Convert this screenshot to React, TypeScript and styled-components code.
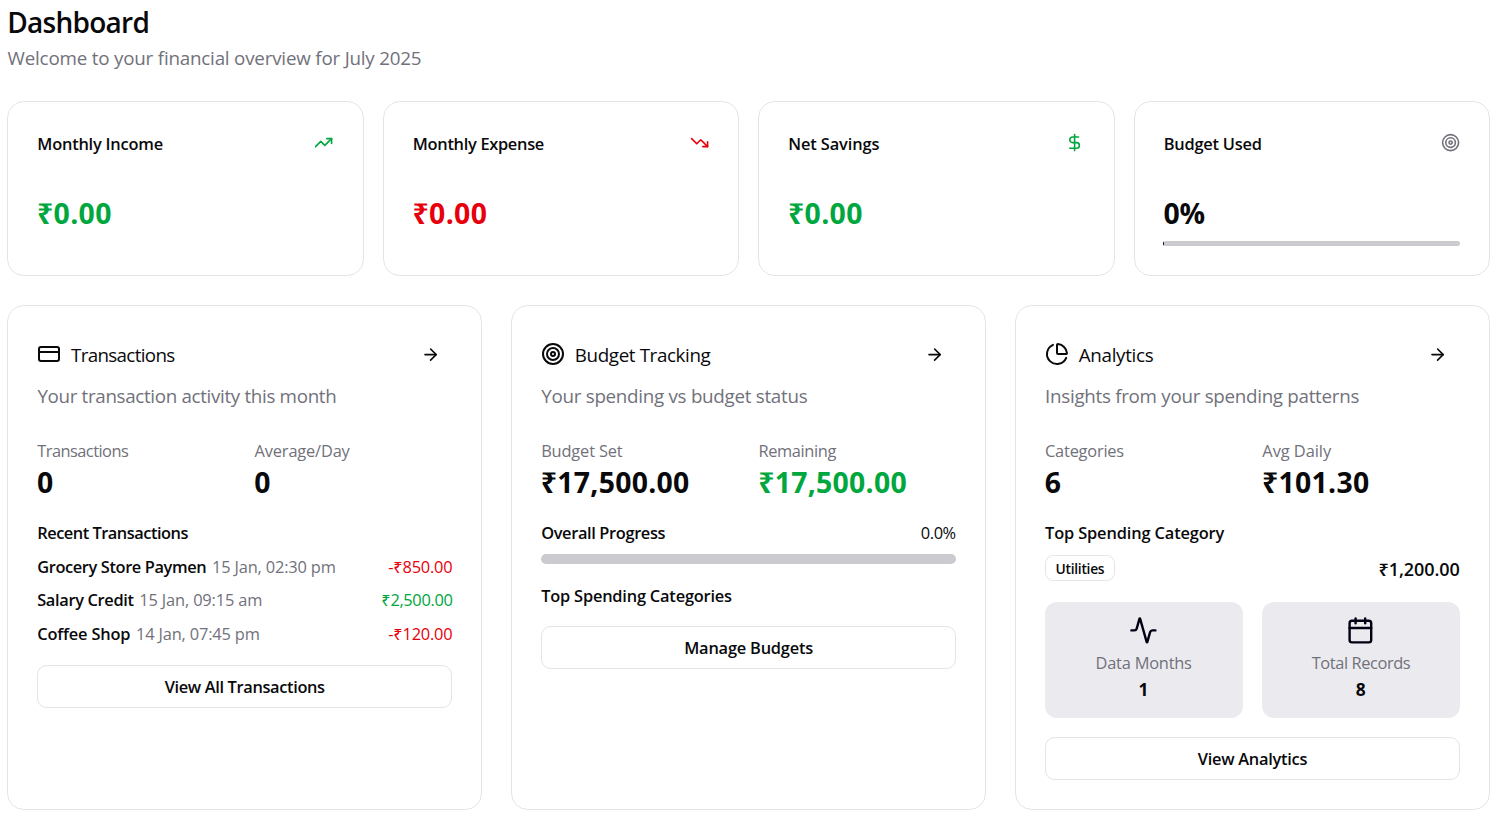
import React from "react";
import styled, { createGlobalStyle } from "styled-components";
import {
  Activity,
  ArrowRight,
  Calendar,
  ChartPie,
  CreditCard,
  DollarSign,
  Target,
  TrendingDown,
  TrendingUp,
} from "lucide-react";

const color = {
  text: "#09090b",
  muted: "#71717b",
  border: "#e4e4e7",
  green: "#00a63e",
  red: "#e7000b",
  track: "#cbcacf",
  tile: "#ebebef",
  primary: "#030014",
};

const GlobalStyle = createGlobalStyle`
  *, *::before, *::after { box-sizing: border-box; }
  body {
    margin: 0;
    background: #fff;
    color: ${color.text};
    font-family: "Open Sans", "Noto Sans", sans-serif;
    overflow: hidden;
  }
  h1, h2, h3, p { margin: 0; }
  svg { display: block; flex-shrink: 0; }
`;

type Tracked = { $ls?: number };

const Page = styled.main`
  display: flex;
  flex-direction: column;
  gap: 28.8px;
  padding: 4.9px 15px 0 7.2px;
`;

const PageTitle = styled.h1`
  font-size: 28px;
  font-weight: 600;
  line-height: 34.4px;
  padding-bottom: 4px;
  letter-spacing: -0.72px;
`;

const PageSubtitle = styled.p`
  color: ${color.muted};
  font-size: 18.8px;
  line-height: 27px;
  letter-spacing: -0.2px;
  padding: 1.8px 0 0 0.4px;
`;

const SummaryGrid = styled.section`
  display: grid;
  grid-template-columns: repeat(4, minmax(0, 1fr));
  gap: 19.2px;
`;

const PanelGrid = styled.section`
  display: grid;
  grid-template-columns: repeat(3, minmax(0, 1fr));
  gap: 28.8px;
`;

const Card = styled.article`
  border: 1px solid ${color.border};
  border-radius: 16.8px;
  padding: 28.8px;
  background: #fff;
`;

const SummaryCard = styled(Card)`
  height: 175.1px;
`;

const PanelCard = styled(Card)`
  height: 504.8px;
`;

const SummaryHeader = styled.div<{ $tone: string }>`
  display: flex;
  justify-content: space-between;
  align-items: center;
  margin-bottom: 38.4px;

  svg {
    color: ${(p) => p.$tone};
    margin: 0 0.4px 0.8px 0;
  }
`;

const Label = styled.h3<Tracked>`
  font-size: 16.4px;
  font-weight: 600;
  line-height: 22px;
  padding: 2px 0 0 0.3px;
  letter-spacing: ${(p) => p.$ls ?? 0}px;
`;

const Figure = styled.div<Tracked & { $tone?: string }>`
  color: ${(p) => p.$tone ?? color.text};
  font-size: 28.4px;
  font-weight: 700;
  line-height: 35.8px;
  padding-top: 2.6px;
  letter-spacing: ${(p) => p.$ls ?? 0}px;
`;

const StatFigure = styled(Figure)`
  padding-top: 3.1px;
`;

const Track = styled.div<{ $height: number; $top: number; $started?: boolean }>`
  height: ${(p) => p.$height}px;
  margin-top: ${(p) => p.$top}px;
  border-radius: 99px;
  overflow: hidden;
  background: ${(p) =>
    p.$started
      ? `linear-gradient(to right, ${color.primary} 0.8px, ${color.track} 0.8px)`
      : color.track};
`;

const PanelHeader = styled.div`
  display: flex;
  justify-content: space-between;
  align-items: center;
  height: 38.4px;
  margin-bottom: 7.2px;
`;

const PanelName = styled.div`
  display: flex;
  align-items: center;
  gap: 9.6px;
`;

const PanelTitle = styled.h2<Tracked>`
  font-size: 18.8px;
  font-weight: 400;
  line-height: 27px;
  letter-spacing: ${(p) => p.$ls ?? 0}px;
  padding: 3px 0 0 0.4px;
`;

const GhostButton = styled.button`
  display: flex;
  align-items: center;
  height: 38.4px;
  padding: 0.8px 12.55px 0;
  border: 0;
  background: none;
  color: ${color.text};
`;

const PanelSubtitle = styled.p<Tracked>`
  color: ${color.muted};
  font-size: 18.8px;
  line-height: 25.4px;
  letter-spacing: ${(p) => p.$ls ?? 0}px;
  padding: 3.4px 0 0 0.4px;
  margin-bottom: 28.8px;
`;

const PanelBody = styled.div`
  display: flex;
  flex-direction: column;
  gap: 19.2px;
`;

const TwoColumns = styled.div`
  display: grid;
  grid-template-columns: repeat(2, minmax(0, 1fr));
  gap: 19.2px;
`;

const Caption = styled.p<Tracked>`
  color: ${color.muted};
  font-size: 16.4px;
  line-height: 22px;
  padding: 2px 0 0 0.3px;
  letter-spacing: ${(p) => p.$ls ?? 0}px;
`;

const TransactionList = styled.ul`
  list-style: none;
  margin: 11.1px 0 0;
  padding: 0;
  display: flex;
  flex-direction: column;
  gap: 9.6px;
`;

const TransactionRow = styled.li`
  display: flex;
  justify-content: space-between;
  font-size: 16.4px;
  line-height: 23.9px;
`;

const TransactionInfo = styled.div`
  display: flex;
  gap: 5.6px;
  padding-left: 0.2px;
`;

const TransactionName = styled.span<Tracked>`
  font-weight: 600;
  letter-spacing: ${(p) => p.$ls ?? 0}px;
`;

const TransactionTime = styled.span`
  color: ${color.muted};
  letter-spacing: -0.16px;
`;

const Amount = styled.span<Tracked & { $tone: string }>`
  color: ${(p) => p.$tone};
  letter-spacing: ${(p) => p.$ls ?? 0}px;
`;

const OutlineButton = styled.button<Tracked>`
  width: 100%;
  height: 43.2px;
  border: 1px solid ${color.border};
  border-radius: 9.6px;
  background: #fff;
  color: ${color.text};
  font-family: inherit;
  font-size: 16.4px;
  font-weight: 600;
  line-height: 24px;
  padding: 1.4px 0 0;
  letter-spacing: ${(p) => p.$ls ?? 0}px;
`;

const SplitRow = styled.div`
  display: flex;
  justify-content: space-between;
  align-items: center;
`;

const Percent = styled.span`
  font-size: 16.4px;
  line-height: 22px;
  padding: 2px 0.6px 0 0;
  letter-spacing: -0.42px;
`;

const CategoryRow = styled(SplitRow)`
  height: 28.8px;
  margin-top: 10.2px;
`;

const Badge = styled.span`
  height: 26px;
  padding: 0 9.8px;
  border: 1px solid ${color.border};
  border-radius: 8.4px;
  font-size: 13.8px;
  font-weight: 600;
  line-height: 25px;
  letter-spacing: -0.27px;
`;

const CategoryAmount = styled.span`
  font-size: 18px;
  font-weight: 600;
  line-height: 26.8px;
  padding: 2px 0.5px 0 0;
  letter-spacing: -0.07px;
`;

const Tile = styled.div`
  display: flex;
  flex-direction: column;
  align-items: center;
  height: 115.6px;
  padding: 14.2px 0.6px 0 0;
  border-radius: 12px;
  background: ${color.tile};

  svg {
    color: ${color.primary};
    margin-bottom: 4.8px;
  }
`;

const TileValue = styled.strong`
  font-size: 17.4px;
  font-weight: 700;
  line-height: 26.4px;
  padding-top: 2.4px;
`;

const SUMMARY = [
  { label: "Monthly Income", ls: -0.22, value: "₹0.00", valueLs: 0.35, tone: color.green, iconTone: color.green, Icon: TrendingUp },
  { label: "Monthly Expense", ls: -0.3, value: "₹0.00", valueLs: 0.35, tone: color.red, iconTone: color.red, Icon: TrendingDown },
  { label: "Net Savings", ls: -0.12, value: "₹0.00", valueLs: 0.35, tone: color.green, iconTone: color.green, Icon: DollarSign },
  { label: "Budget Used", ls: -0.24, value: "0%", valueLs: -0.23, tone: color.text, iconTone: color.muted, Icon: Target, track: true },
];

const TRANSACTIONS = [
  { name: "Grocery Store Paymen", ls: -0.38, time: "15 Jan, 02:30 pm", amount: "-₹850.00", amountLs: -0.2, tone: color.red },
  { name: "Salary Credit", ls: -0.33, time: "15 Jan, 09:15 am", amount: "₹2,500.00", amountLs: -0.34, tone: color.green },
  { name: "Coffee Shop", ls: -0.17, time: "14 Jan, 07:45 pm", amount: "-₹120.00", amountLs: -0.2, tone: color.red },
];

type PanelProps = {
  Icon: typeof Target;
  title: string;
  titleLs: number;
  subtitle: string;
  subtitleLs: number;
  children: React.ReactNode;
};

function Panel({ Icon, title, titleLs, subtitle, subtitleLs, children }: PanelProps) {
  return (
    <PanelCard>
      <PanelHeader>
        <PanelName>
          <Icon size={24} />
          <PanelTitle $ls={titleLs}>{title}</PanelTitle>
        </PanelName>
        <GhostButton aria-label={`Open ${title}`}>
          <ArrowRight size={19.2} />
        </GhostButton>
      </PanelHeader>
      <PanelSubtitle $ls={subtitleLs}>{subtitle}</PanelSubtitle>
      <PanelBody>{children}</PanelBody>
    </PanelCard>
  );
}

type StatProps = { label: string; ls: number; value: string; valueLs?: number; tone?: string };

function Stat({ label, ls, value, valueLs, tone }: StatProps) {
  return (
    <div>
      <Caption $ls={ls}>{label}</Caption>
      <StatFigure $ls={valueLs} $tone={tone}>{value}</StatFigure>
    </div>
  );
}

export default function App() {
  return (
    <>
      <GlobalStyle />
      <Page>
        <header>
          <PageTitle>Dashboard</PageTitle>
          <PageSubtitle>Welcome to your financial overview for July 2025</PageSubtitle>
        </header>

        <SummaryGrid>
          {SUMMARY.map(({ label, ls, value, valueLs, tone, iconTone, Icon, track }) => (
            <SummaryCard key={label}>
              <SummaryHeader $tone={iconTone}>
                <Label $ls={ls}>{label}</Label>
                <Icon size={19.2} />
              </SummaryHeader>
              <Figure $tone={tone} $ls={valueLs}>{value}</Figure>
              {track && <Track $height={4.8} $top={9.3} $started />}
            </SummaryCard>
          ))}
        </SummaryGrid>

        <PanelGrid>
          <Panel
            Icon={CreditCard}
            title="Transactions"
            titleLs={-0.66}
            subtitle="Your transaction activity this month"
            subtitleLs={-0.33}
          >
            <TwoColumns>
              <Stat label="Transactions" ls={-0.54} value="0" />
              <Stat label="Average/Day" ls={-0.17} value="0" />
            </TwoColumns>
            <div>
              <Label $ls={-0.49}>Recent Transactions</Label>
              <TransactionList>
                {TRANSACTIONS.map((t) => (
                  <TransactionRow key={t.name}>
                    <TransactionInfo>
                      <TransactionName $ls={t.ls}>{t.name}</TransactionName>
                      <TransactionTime>{t.time}</TransactionTime>
                    </TransactionInfo>
                    <Amount $tone={t.tone} $ls={t.amountLs}>{t.amount}</Amount>
                  </TransactionRow>
                ))}
              </TransactionList>
            </div>
            <OutlineButton $ls={-0.35}>View All Transactions</OutlineButton>
          </Panel>

          <Panel
            Icon={Target}
            title="Budget Tracking"
            titleLs={-0.38}
            subtitle="Your spending vs budget status"
            subtitleLs={-0.28}
          >
            <TwoColumns>
              <Stat label="Budget Set" ls={-0.15} value="₹17,500.00" valueLs={0.27} />
              <Stat label="Remaining" ls={-0.38} value="₹17,500.00" valueLs={0.27} tone={color.green} />
            </TwoColumns>
            <div>
              <SplitRow>
                <Label $ls={-0.36}>Overall Progress</Label>
                <Percent>0.0%</Percent>
              </SplitRow>
              <Track $height={9.6} $top={10.2} />
            </div>
            <Label $ls={-0.2}>Top Spending Categories</Label>
            <OutlineButton $ls={-0.21}>Manage Budgets</OutlineButton>
          </Panel>

          <Panel
            Icon={ChartPie}
            title="Analytics"
            titleLs={-0.3}
            subtitle="Insights from your spending patterns"
            subtitleLs={-0.29}
          >
            <TwoColumns>
              <Stat label="Categories" ls={-0.22} value="6" />
              <Stat label="Avg Daily" ls={-0.05} value="₹101.30" valueLs={0.28} />
            </TwoColumns>
            <div>
              <Label $ls={-0.14}>Top Spending Category</Label>
              <CategoryRow>
                <Badge>Utilities</Badge>
                <CategoryAmount>₹1,200.00</CategoryAmount>
              </CategoryRow>
            </div>
            <TwoColumns>
              <Tile>
                <Activity size={28.8} />
                <Caption $ls={-0.22}>Data Months</Caption>
                <TileValue>1</TileValue>
              </Tile>
              <Tile>
                <Calendar size={28.8} />
                <Caption $ls={-0.4}>Total Records</Caption>
                <TileValue>8</TileValue>
              </Tile>
            </TwoColumns>
            <OutlineButton $ls={-0.27}>View Analytics</OutlineButton>
          </Panel>
        </PanelGrid>
      </Page>
    </>
  );
}
